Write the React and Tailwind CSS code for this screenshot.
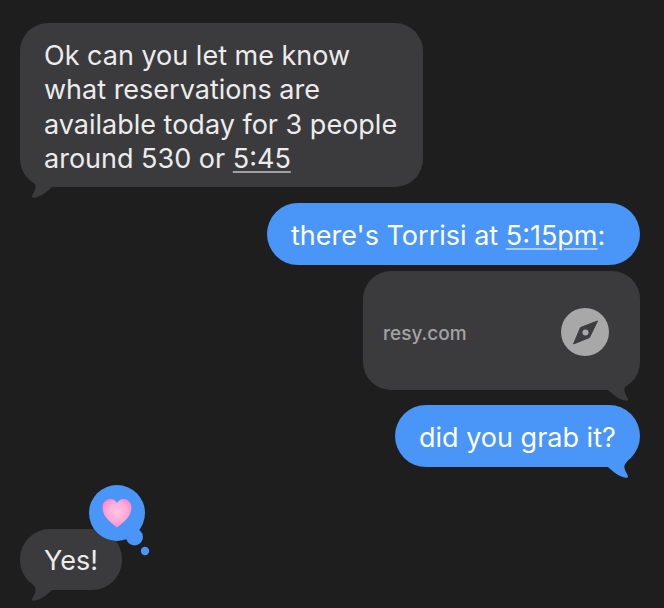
import React from "react";

const TailLeft = ({ color }) => (
  <svg className="absolute left-[-1px] bottom-[-13px]" width="36" height="24" viewBox="0 0 36 24">
    <path d="M10 0 L15 7 C17 9 17 11 16 14 C15 17 13 19 13 20.500 C13 21.500 14 22 15 21.800 C22 20.500 28 16 33 11 L33 0 Z" fill={color} />
  </svg>
);

const TailRight = ({ color }) => (
  <svg className="absolute right-[-1px] bottom-[-13px]" width="36" height="24" viewBox="0 0 36 24">
    <path d="M26 0 L21 7 C19 9 19 11 20 14 C21 17 23 19 23 20.500 C23 21.500 22 22 21 21.800 C14 20.500 8 16 3 11 L3 0 Z" fill={color} />
  </svg>
);

const Reaction = () => (
  <div className="absolute left-[69px] top-[-44px]">
    <svg width="62" height="74" viewBox="0 0 62 74" className="block">
      <circle cx="28" cy="28" r="28" fill="#4a95f8" />
      <circle cx="45.500" cy="52" r="8.500" fill="#4a95f8" />
      <circle cx="56" cy="66" r="4.200" fill="#4a95f8" />
      <defs>
        <radialGradient id="heart" cx="0.5" cy="0.45" r="0.6">
          <stop offset="0" stopColor="#ffc6e4" />
          <stop offset="0.6" stopColor="#ffa8d8" />
          <stop offset="1" stopColor="#ff7cc2" />
        </radialGradient>
      </defs>
      <path
        d="M28 42.500 C23 38.500 13.500 32 13.500 22.500 C13.500 17 17.500 14 21.500 14 C24.500 14 26.800 15.800 28 18 C29.200 15.800 31.500 14 34.500 14 C38.500 14 42.500 17 42.500 22.500 C42.500 32 33 38.500 28 42.500 Z"
        fill="url(#heart)"
      />
    </svg>
  </div>
);

const Compass = () => (
  <svg width="48" height="48" viewBox="0 0 48 48" className="block">
    <circle cx="24" cy="24" r="24" fill="#a8a8a8" />
    <path d="M36.500 13 L28.500 29.500 L12.500 36 L19.500 19.500 Z" fill="#3d3d3f" stroke="#3d3d3f" strokeWidth="1" strokeLinejoin="round" />
    <circle cx="24.500" cy="24.500" r="3" fill="#a8a8a8" />
  </svg>
);

const App = () => {
  const gray = "#3b3b3d";
  const blue = "#4a95f8";

  return (
    <div className="min-h-screen w-full bg-[#1e1e1e] pt-[23px] font-['Inter',sans-serif] text-[27px] leading-[34.300px] overflow-hidden">
      {/* incoming question */}
      <div className="pl-5">
        <div className="relative w-[403px] h-[164px] rounded-[28px] bg-[#3b3b3d] pl-6 pt-4 text-[#ececec]">
          <TailLeft color={gray} />
          <p className="relative whitespace-nowrap">Ok can you let me know</p>
          <p className="relative whitespace-nowrap">what reservations are</p>
          <p className="relative whitespace-nowrap">available today for 3 people</p>
          <p className="relative whitespace-nowrap">
            around 530 or <span className="underline decoration-[#a0a0a0] decoration-2 underline-offset-[3px]">5:45</span>
          </p>
        </div>
      </div>

      {/* outgoing */}
      <div className="flex flex-col items-end pr-6 mt-4">
        <div className="h-[62px] w-[373px] rounded-[31px] bg-[#4a95f8] pl-6 pt-1 flex items-center text-white whitespace-nowrap">
          <span>
            there's Torrisi at <span className="underline decoration-[#a9ccfb] decoration-2 underline-offset-[3px]">5:15pm</span>:
          </span>
        </div>

        <div className="relative mt-[6px] h-[119px] w-[277px] rounded-[28px] bg-[#3b3b3d] pl-5 pr-[31px] flex items-center justify-between">
          <TailRight color={gray} />
          <span className="relative mt-[8px] text-[19px] font-medium text-[#a3a3a3]">resy.com</span>
          <span className="relative mt-[2px]"><Compass /></span>
        </div>

        <div className="relative mt-[15px] h-[62px] w-[245px] rounded-[31px] bg-[#4a95f8] pl-6 pt-1 flex items-center text-white whitespace-nowrap">
          <TailRight color={blue} />
          <span className="relative">did you grab it?</span>
        </div>
      </div>

      {/* reply with tapback */}
      <div className="pl-5 mt-[62px]">
        <div className="relative w-[102px] h-[61px] rounded-[30px] bg-[#3b3b3d] pl-6 pt-1 flex items-center text-[#ececec]">
          <TailLeft color={gray} />
          <span className="relative">Yes!</span>
          <Reaction />
        </div>
      </div>
    </div>
  );
};

export default App;
